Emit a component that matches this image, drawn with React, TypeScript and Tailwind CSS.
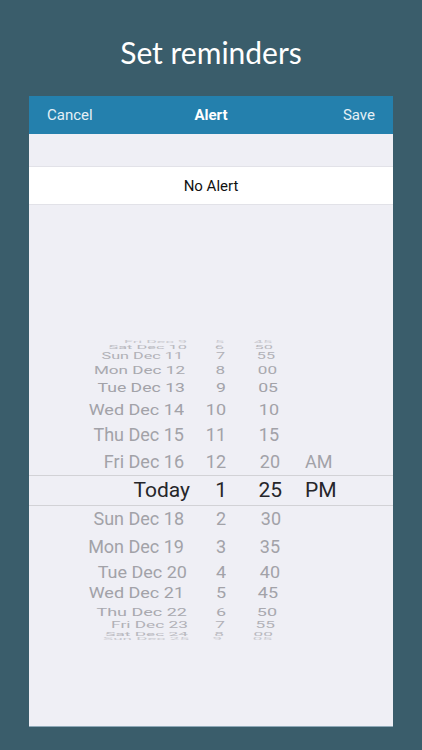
import React from "react";

// y: row height, sy/sx: squash of the wheel, d/h/m: right edges of date, hour, minute
const rows = [
  { date: "Fri Dec 9", hour: "5", min: "45", y: 4, sy: 0.16, sx: 0.9, d: 187, h: 224, m: 272, o: 0.5 },
  { date: "Sat Dec 10", hour: "6", min: "50", y: 6, sy: 0.31, sx: 0.91, d: 187, h: 224, m: 273, o: 0.7 },
  { date: "Sun Dec 11", hour: "7", min: "55", y: 12, sy: 0.46, sx: 0.9, d: 183, h: 225, m: 275, o: 0.8 },
  { date: "Mon Dec 12", hour: "8", min: "00", y: 16, sy: 0.61, sx: 0.95, d: 185, h: 225, m: 277, o: 0.9 },
  { date: "Tue Dec 13", hour: "9", min: "05", y: 20, sy: 0.73, sx: 0.98, d: 185, h: 226, m: 278, o: 1 },
  { date: "Wed Dec 14", hour: "10", min: "10", y: 23, sy: 0.84, sx: 1, d: 184, h: 226, m: 279, o: 1 },
  { date: "Thu Dec 15", hour: "11", min: "15", y: 27, sy: 1, sx: 1, d: 184, h: 226, m: 279, o: 1 },
  { date: "Fri Dec 16", hour: "12", min: "20", ap: "AM", y: 27, sy: 1.05, sx: 1, d: 184, h: 226, m: 280, o: 1 },
];

const lower = [
  { date: "Sun Dec 18", hour: "2", min: "30", y: 26, sy: 1.05, sx: 1, d: 184, h: 226, m: 281, o: 1 },
  { date: "Mon Dec 19", hour: "3", min: "35", y: 30, sy: 1, sx: 1, d: 184, h: 226, m: 280, o: 1 },
  { date: "Tue Dec 20", hour: "4", min: "40", y: 21, sy: 0.89, sx: 1, d: 187, h: 226, m: 280, o: 1 },
  { date: "Wed Dec 21", hour: "5", min: "45", y: 20, sy: 0.77, sx: 1, d: 184, h: 226, m: 278, o: 1 },
  { date: "Thu Dec 22", hour: "6", min: "50", y: 17, sy: 0.61, sx: 1, d: 187, h: 226, m: 277, o: 0.9 },
  { date: "Fri Dec 23", hour: "7", min: "55", y: 10, sy: 0.49, sx: 0.96, d: 188, h: 225, m: 275, o: 0.8 },
  { date: "Sat Dec 24", hour: "8", min: "00", y: 7, sy: 0.33, sx: 0.96, d: 188, h: 224, m: 273, o: 0.7 },
  { date: "Sun Dec 25", hour: "9", min: "05", y: 4, sy: 0.16, sx: 0.95, d: 189, h: 222, m: 272, o: 0.5 },
];

type RowData = (typeof rows)[number] & { ap?: string };

const WheelRow = ({ row }: { row: RowData }) => {
  const t = { transform: `scale(${row.sx}, ${row.sy})`, transformOrigin: "right center", opacity: row.o };
  return (
    <div className="flex items-center text-[18px] leading-none text-[#a2a2a8]" style={{ height: row.y }}>
      <span className="text-right whitespace-nowrap" style={{ ...t, width: row.d - 29 }}>
        {row.date}
      </span>
      <span className="text-right" style={{ ...t, width: row.h - row.d }}>
        {row.hour}
      </span>
      <span className="text-right" style={{ ...t, width: row.m - row.h }}>
        {row.min}
      </span>
      {row.ap ? <span style={{ marginLeft: 305 - row.m }}>{row.ap}</span> : null}
    </div>
  );
};

export default function App() {
  return (
    <div className="flex h-[750px] w-full flex-col items-center overflow-hidden bg-[#3a5d6b] font-['Roboto',sans-serif]">
      <div className="flex h-[96px] items-center pt-[8px] font-['Lato',sans-serif] text-[30px] text-white">
        Set reminders
      </div>

      <div className="flex h-[630px] w-[364px] flex-col bg-[#efeff5] shadow-[0_1px_0_#8fa9b8]">
        <div className="grid h-[38px] shrink-0 grid-cols-3 items-center bg-[#2480ad] px-[18px] text-[15px] text-[#e4f0f6]">
          <span>Cancel</span>
          <span className="text-center font-bold text-white">Alert</span>
          <span className="text-right">Save</span>
        </div>

        <div className="h-[32px] shrink-0" />

        <div className="flex h-[39px] shrink-0 items-center justify-center border-y border-[#e2e2e8] bg-white pt-[1px] text-[15px] text-[#111]">
          No Alert
        </div>

        <div className="h-[135px] shrink-0" />

        {rows.map((row) => (
          <WheelRow key={row.date} row={row} />
        ))}

        <div className="flex h-[31px] shrink-0 items-center border-y border-[#d2d2d6] text-[21px] leading-none text-[#26262a]">
          <span className="w-[161px] text-right">Today</span>
          <span className="w-[37px] text-right">1</span>
          <span className="w-[55px] text-right">25</span>
          <span className="ml-[23px]">PM</span>
        </div>

        {lower.map((row) => (
          <WheelRow key={row.date} row={row} />
        ))}
      </div>
    </div>
  );
}
